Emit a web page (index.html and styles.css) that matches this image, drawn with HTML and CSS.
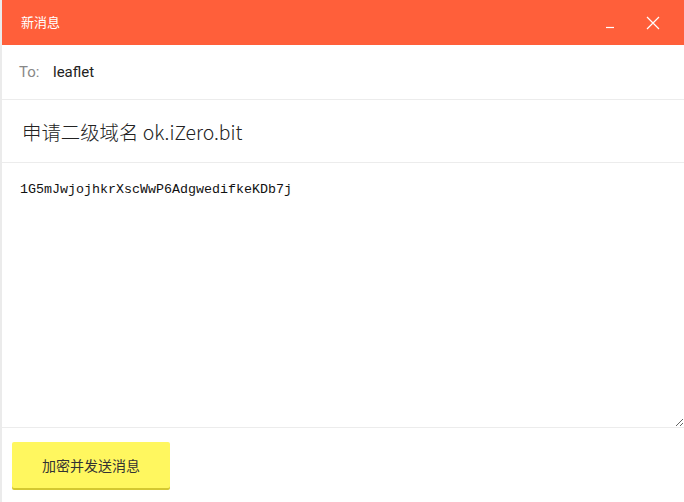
FILE: index.html
```html
<!DOCTYPE html>
<html lang="zh">
<head>
<meta charset="utf-8">
<link rel="stylesheet" href="styles.css">
</head>
<body>
<div class="window">
  <header class="titlebar">
    <span class="title">新消息</span>
    <div class="controls">
      <svg class="icon-min" width="10" height="10" viewBox="0 0 10 10"><path d="M1 8.5H9" stroke="#fff" stroke-width="1.2"/></svg>
      <svg class="icon-close" width="14" height="14" viewBox="0 0 14 14"><path d="M1 1L13 13M13 1L1 13" stroke="#fff" stroke-width="1.2"/></svg>
    </div>
  </header>
  <div class="to-row">
    <span class="to-label">To:</span>
    <span class="to-value">leaflet</span>
  </div>
  <div class="subject-row">申请二级域名 ok.iZero.bit</div>
  <textarea class="body-text">1G5mJwjojhkrXscWwP6AdgwedifkeKDb7j</textarea>
  <div class="footer">
    <button class="send">加密并发送消息</button>
  </div>
</div>
</body>
</html>
```

FILE: styles.css
```css
html, body {
  margin: 0;
  padding: 0;
  background: #fff;
}
.window {
  width: 684px;
  height: 502px;
  box-sizing: border-box;
  border-left: 2px solid #ebebeb;
  display: flex;
  flex-direction: column;
  font-family: Roboto, "Noto Sans CJK SC", sans-serif;
}
.titlebar {
  height: 45px;
  flex: none;
  background: #ff5f3a;
  display: flex;
  align-items: center;
  justify-content: space-between;
  padding: 0 24px 0 19px;
  color: #fff;
  box-sizing: border-box;
}
.title {
  font-family: "Noto Sans CJK SC", sans-serif;
  font-size: 13px;
  padding-bottom: 2px;
}
.controls {
  display: flex;
  align-items: center;
  gap: 31px;
}
.icon-min { margin-top: 2px; }
.to-row {
  height: 54px;
  flex: none;
  border-bottom: 1px solid #ececec;
  display: flex;
  align-items: center;
  padding-left: 17px;
  font-size: 15px;
}
.to-label {
  color: #888;
  width: 34px;
}
.to-value {
  color: #222;
}
.subject-row {
  height: 62px;
  flex: none;
  border-bottom: 1px solid #ececec;
  display: flex;
  align-items: center;
  padding-left: 20px;
  font-size: 19.4px;
  color: #222;
  font-family: "Noto Sans CJK SC", sans-serif;
  font-weight: 300;
}
.body-text {
  flex: none;
  height: 265px;
  box-sizing: border-box;
  border: none;
  border-bottom: 1px solid #ececec;
  outline: none;
  resize: vertical;
  padding: 19px 18px;
  font-family: "Liberation Mono", monospace;
  font-size: 13.33px;
  color: #111;
  margin: 0;
  width: 100%;
}
.footer {
  padding: 14px 10px;
}
.send {
  width: 158px;
  height: 46px;
  border: none;
  border-radius: 2px;
  background: #fff75f;
  box-shadow: 0 2px 0 #d4c831;
  font-family: "Noto Sans CJK SC", sans-serif;
  font-size: 14px;
  color: #333;
  letter-spacing: 0;
  padding: 0 0 1px;
}
```
